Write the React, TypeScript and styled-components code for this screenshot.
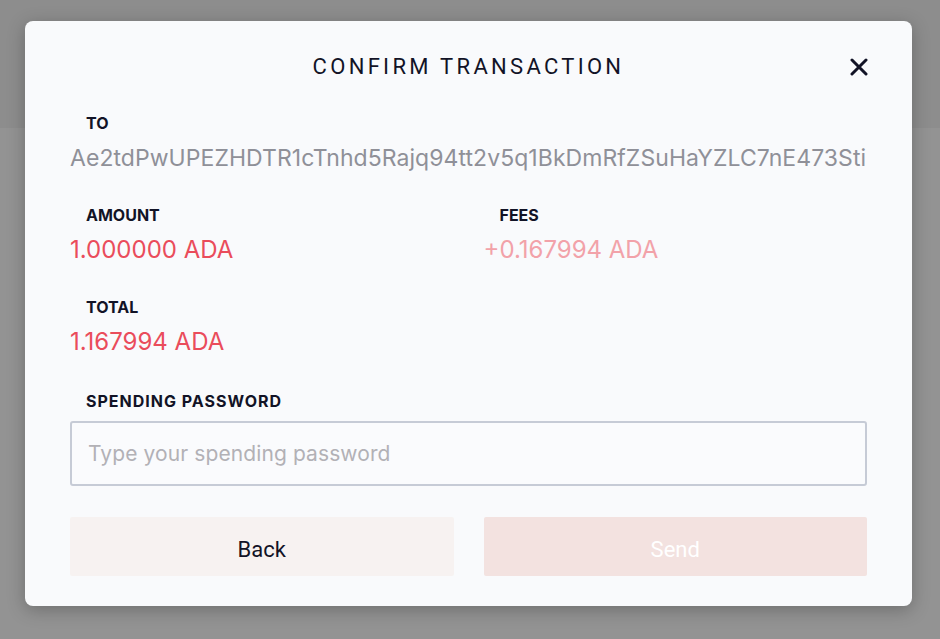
import React from "react";
import styled, { createGlobalStyle } from "styled-components";

const Global = createGlobalStyle`
  html, body {
    margin: 0;
    padding: 0;
    background: #939393;
  }
  * {
    box-sizing: border-box;
  }
`;

const Backdrop = styled.div`
  position: relative;
  width: 940px;
  height: 639px;
  background: linear-gradient(#8d8d8d 0, #8d8d8d 128px, #939393 128px);
  padding: 21px 28px 0 25px;
`;

const Modal = styled.div`
  width: 887px;
  height: 585px;
  background: #f9fafc;
  border-radius: 8px;
  box-shadow: 0 4px 18px rgba(0, 0, 0, 0.25);
  padding: 33px 45px 0 45px;
  font-family: Inter, "Noto Sans", sans-serif;
`;

const Header = styled.div`
  position: relative;
  display: flex;
  justify-content: center;
  align-items: center;
  height: 26px;
  margin-bottom: 33px;
`;

const Title = styled.h1`
  margin: 0;
  font-family: Roboto, "Liberation Sans", sans-serif;
  font-weight: 400;
  font-size: 22px;
  line-height: 26px;
  letter-spacing: 3.3px;
  color: #121326;
`;

const Close = styled.button`
  position: absolute;
  right: -1px;
  top: 50%;
  transform: translateY(-50%);
  width: 18px;
  height: 18px;
  padding: 0;
  border: none;
  background: none;
  display: flex;
  align-items: center;
  justify-content: center;
  cursor: pointer;
`;

const Row = styled.div`
  display: grid;
  grid-template-columns: 1fr 1fr;
  column-gap: 30px;
`;

const Field = styled.div<{ $gap?: number }>`
  margin-bottom: ${(p) => p.$gap ?? 33}px;
`;

const Label = styled.div<{ $spaced?: boolean; $tight?: boolean }>`
  padding-left: 16px;
  font-size: 16px;
  font-weight: 700;
  line-height: 20px;
  color: #121326;
  letter-spacing: ${(p) => (p.$spaced ? "1px" : "0")};
  margin-bottom: ${(p) => (p.$tight ? 10 : 11)}px;
`;

const Address = styled.div`
  font-size: 23px;
  line-height: 28px;
  letter-spacing: 0.06px;
  color: #8f9098;
  white-space: nowrap;
  overflow: hidden;
`;

const Value = styled.div<{ $muted?: boolean }>`
  font-size: 24px;
  line-height: 28px;
  color: ${(p) => (p.$muted ? "#f2a2a9" : "#ea4c5b")};
`;

const Input = styled.input`
  display: block;
  width: 100%;
  height: 65px;
  border: 2px solid #c6cbd6;
  border-radius: 3px;
  background: #fafbfd;
  padding: 0 16px;
  font-family: Inter, "Noto Sans", sans-serif;
  font-size: 21px;
  letter-spacing: 0.1px;
  color: #121326;
  outline: none;

  &::placeholder {
    color: #b2b1b6;
  }
`;

const Buttons = styled.div`
  display: grid;
  grid-template-columns: 1fr 1fr;
  column-gap: 30px;
  margin-top: 31px;
`;

const Button = styled.button<{ $primary?: boolean }>`
  height: 59px;
  padding: 5px 0 0;
  border: none;
  border-radius: 2px;
  font-family: Roboto, "Liberation Sans", sans-serif;
  font-size: 22px;
  color: ${(p) => (p.$primary ? "#ffffff" : "#121326")};
  background: ${(p) => (p.$primary ? "#f3e2e0" : "#f7f2f1")};
  cursor: pointer;
`;

export default function App() {
  return (
    <>
      <Global />
      <Backdrop>
        <Modal>
          <Header>
            <Title>CONFIRM TRANSACTION</Title>
            <Close aria-label="close">
              <svg width="18" height="18" viewBox="0 0 18 18">
                <path
                  d="M2 2L16 16M16 2L2 16"
                  stroke="#121326"
                  strokeWidth="3"
                  strokeLinecap="round"
                />
              </svg>
            </Close>
          </Header>

          <Field>
            <Label>TO</Label>
            <Address>Ae2tdPwUPEZHDTR1cTnhd5Rajq94tt2v5q1BkDmRfZSuHaYZLC7nE473Sti</Address>
          </Field>

          <Row>
            <Field>
              <Label>AMOUNT</Label>
              <Value>1.000000 ADA</Value>
            </Field>
            <Field>
              <Label>FEES</Label>
              <Value $muted>+0.167994 ADA</Value>
            </Field>
          </Row>

          <Field $gap={35}>
            <Label>TOTAL</Label>
            <Value>1.167994 ADA</Value>
          </Field>

          <Field $gap={0}>
            <Label $spaced $tight>SPENDING PASSWORD</Label>
            <Input type="password" placeholder="Type your spending password" />
          </Field>

          <Buttons>
            <Button>Back</Button>
            <Button $primary>Send</Button>
          </Buttons>
        </Modal>
      </Backdrop>
    </>
  );
}
